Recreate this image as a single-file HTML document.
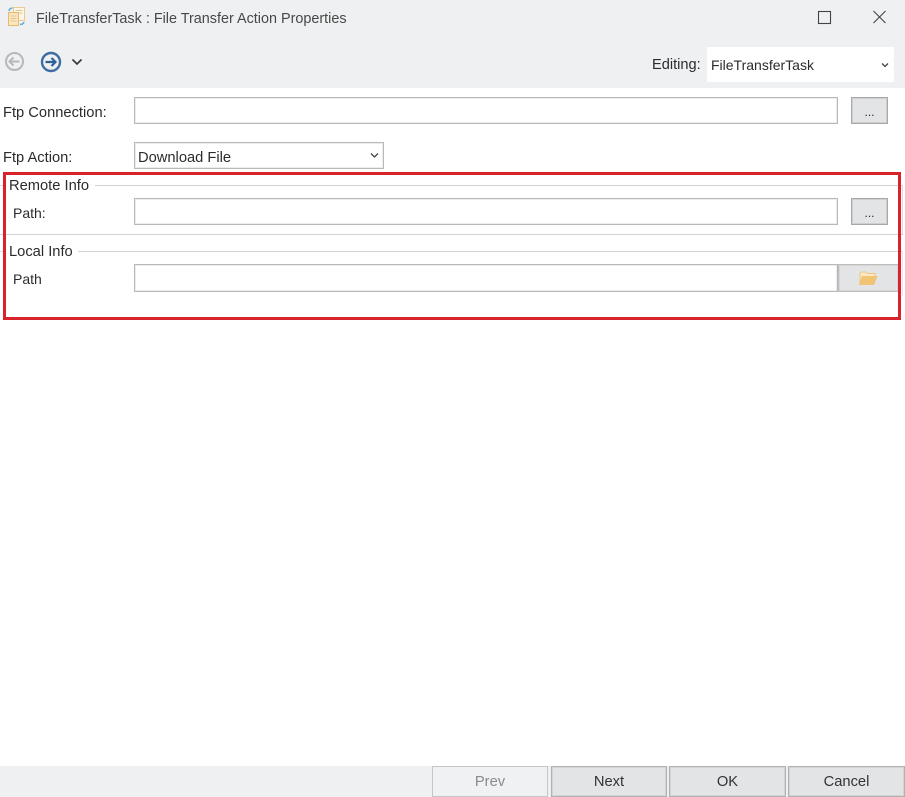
<!DOCTYPE html>
<html><head><meta charset="utf-8"><style>
html,body{margin:0;padding:0;background:#fff}
#p{position:relative;width:905px;height:797px;overflow:hidden;background:#fff;font-family:"Liberation Sans",sans-serif;font-size:14.7px;color:#2b2b2b}
#p div{position:absolute;box-sizing:border-box}
.t{white-space:nowrap;line-height:18px}
.i{background:#fff;border:1px solid #b9b9b9;box-shadow:inset 0 0 0 1px #ececec}
.b{background:#e3e4e6;border:1px solid #a8a8a8;box-shadow:inset 0 0 0 1px #cfcfd1;text-align:center}
.f{background:#e3e4e6;border:1px solid #b0b0b0;box-shadow:inset 0 0 0 1px #d4d4d6;text-align:center;line-height:31px;height:31px;top:766px;font-size:14.7px;color:#333}
.l{background:#d2d2d6;height:1px}
</style></head><body><div id="p">
<div style="left:0;top:0;width:905px;height:88px;background:#eef0f2"></div>
<svg style="position:absolute;left:7px;top:6px" width="19" height="21" viewBox="0 0 19 21" fill="none">
<rect x="6.500" y="1.500" width="11" height="13" fill="#fdf6e6" stroke="#ecc98a"/>
<rect x="1.500" y="6.500" width="10" height="13" fill="#fbe6bd" stroke="#eab868"/>
<path d="M8.500 4.500h7M8.500 7h7M3.500 10h6M3.500 12.500h6M3.500 15h6" stroke="#dcc59c"/>
<path d="M2 5C2.500 3 4 2 5.500 2" stroke="#5aaee0" stroke-width="1.500"/>
<path d="M13 18.500C15 18.500 16.500 17.500 17 16" stroke="#5aaee0" stroke-width="1.500"/>
</svg>
<div class="t" style="left:36px;top:10px;font-size:14.4px;color:#484848">FileTransferTask : File Transfer Action Properties</div>
<svg style="position:absolute;left:815px;top:8px" width="20" height="18" fill="none"><rect x="3.500" y="3.500" width="12" height="12" stroke="#444" stroke-width="1.100"/></svg>
<svg style="position:absolute;left:870px;top:8px" width="18" height="18" fill="none"><path d="M3.500 3L15.500 15M15.500 3L3.500 15" stroke="#444" stroke-width="1.100"/></svg>
<svg style="position:absolute;left:3px;top:50px" width="23" height="23" fill="none"><circle cx="11.500" cy="11.500" r="8.500" stroke="#b8b8b8" stroke-width="2"/><path d="M16.500 11.500H7M10.500 7.500L6.500 11.500L10.500 15.500" stroke="#b8b8b8" stroke-width="2"/></svg>
<svg style="position:absolute;left:40px;top:50px" width="23" height="24" fill="none"><circle cx="11" cy="12" r="9" stroke="#3f6ea3" stroke-width="2.400"/><path d="M5.500 12H15.500M11.500 8L15.500 12L11.500 16" stroke="#2d5f98" stroke-width="2.200"/></svg>
<svg style="position:absolute;left:70px;top:56px" width="14" height="12" fill="none"><path d="M2.500 3.500L7 8L11.500 3.500" stroke="#333" stroke-width="1.600"/></svg>
<div class="t" style="left:652px;top:56px;font-size:14.6px">Editing:</div>
<div style="left:707px;top:47px;width:187px;height:35px;background:#fff"></div>
<div class="t" style="left:711px;top:56px;font-size:14px">FileTransferTask</div>
<svg style="position:absolute;left:879px;top:61px" width="12" height="10" fill="none"><path d="M3 2.500L6 5.500L9 2.500" stroke="#444" stroke-width="1.300"/></svg>

<div class="t" style="left:3px;top:104px">Ftp Connection:</div>
<div class="i" style="left:134px;top:97px;width:704px;height:27px"></div>
<div class="b" style="left:851px;top:97px;width:37px;height:27px;line-height:29px;font-size:12px">...</div>
<div class="t" style="left:3px;top:149px">Ftp Action:</div>
<div class="i" style="left:134px;top:142px;width:250px;height:27px"></div>
<div class="t" style="left:138px;top:149px">Download File</div>
<svg style="position:absolute;left:369px;top:151px" width="12" height="10" fill="none"><path d="M2 2.500L5.500 6L9 2.500" stroke="#444" stroke-width="1.300"/></svg>

<div class="t" style="left:9px;top:177px">Remote Info</div>
<div class="l" style="left:95px;top:185px;width:808px"></div>
<div style="left:902px;top:185px;width:1px;height:49px;background:#dcdce0"></div>
<div class="l" style="left:0;top:234px;width:903px"></div>
<div style="left:0;top:185px;width:3px;height:1px;background:#dcdce0"></div>
<div style="left:0;top:251px;width:3px;height:1px;background:#dcdce0"></div>
<div class="t" style="left:13px;top:204px;font-size:14px">Path:</div>
<div class="i" style="left:134px;top:198px;width:704px;height:27px"></div>
<div class="b" style="left:851px;top:198px;width:37px;height:27px;line-height:29px;font-size:12px">...</div>
<div class="t" style="left:9px;top:243px">Local Info</div>
<div class="l" style="left:78px;top:251px;width:825px"></div>
<div style="left:902px;top:251px;width:1px;height:45px;background:#e6e6ea"></div>
<div class="t" style="left:13px;top:270px;font-size:14px">Path</div>
<div class="i" style="left:134px;top:264px;width:704px;height:28px"></div>
<div style="left:838px;top:264px;width:61px;height:28px;background:#e3e4e6;border:1px solid #bdbdbd;box-shadow:inset 0 0 0 1px #d6d6d8"></div>
<svg style="position:absolute;left:857px;top:269px" width="22" height="18" fill="none"><path d="M3 15V4.500L4.500 3H9L10.500 4.500H18V7" stroke="#ecc583" fill="#fbe9c4"/><path d="M2 16L5 7H20.500L17 16Z" fill="#f1c374"/></svg>
<div style="left:3px;top:172px;width:898px;height:148px;border:3px solid #d8232c"></div>

<div style="left:0;top:766px;width:905px;height:31px;background:#eef0f2"></div>
<div class="f" style="left:432px;width:116px;background:#f0f1f2;color:#8a8a8a;border-color:#c6c6c6;box-shadow:none">Prev</div>
<div class="f" style="left:551px;width:116px">Next</div>
<div class="f" style="left:669px;width:117px">OK</div>
<div class="f" style="left:788px;width:117px">Cancel</div>
</div></body></html>
